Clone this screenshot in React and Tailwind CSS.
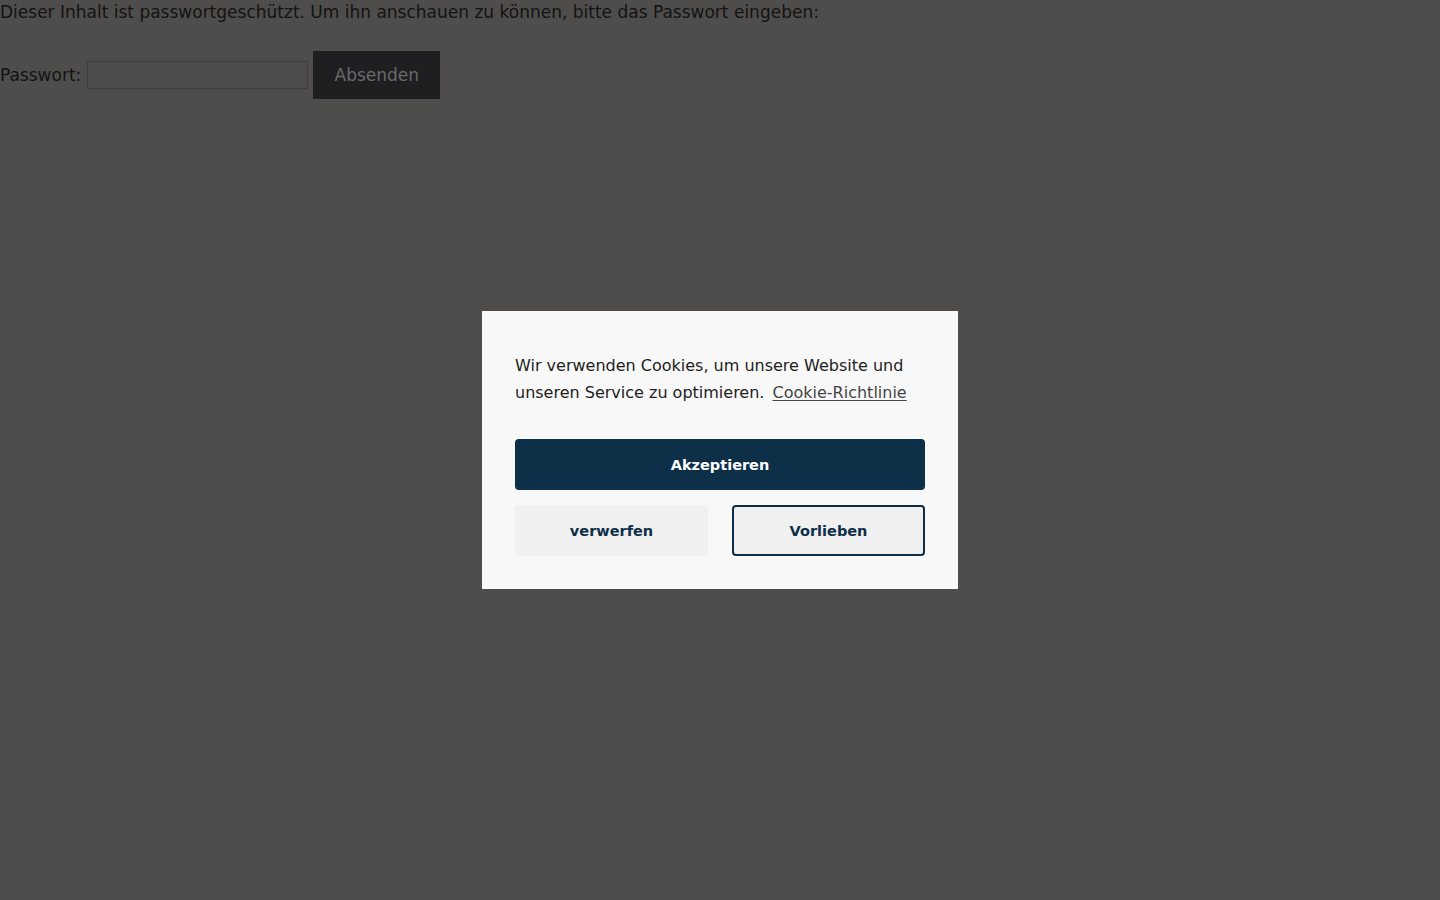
export default function App() {
  return (
    <div className="min-h-screen w-full bg-[#4e4d4b] text-[#131313] font-['DejaVu_Sans',sans-serif] text-[17px]">
      <p className="leading-[24px]">
        Dieser Inhalt ist passwortgeschützt. Um ihn anschauen zu können, bitte das Passwort eingeben:
      </p>
      <form className="mt-[27px] flex items-center" onSubmit={(e) => e.preventDefault()}>
        <label className="mr-[6px] leading-[24px]">Passwort:</label>
        <input
          type="password"
          className="h-[28px] w-[221px] border border-[#3f3e3c] bg-[#4d4c4a] outline-none"
        />
        <button
          type="submit"
          className="ml-[5px] h-[48px] w-[127px] bg-[#1f1f21] text-[#6a6a6a] leading-[24px]"
        >
          Absenden
        </button>
      </form>

      {/* Cookie consent dialog */}
      <div className="fixed inset-0 flex items-center justify-center">
        <div className="w-[476px] bg-[#f8f8f8] px-[33px] pt-[41px] pb-[33px]">
          <p className="text-[16px] leading-[27px] text-[#222222]">
            Wir verwenden Cookies, um unsere Website und unseren Service zu optimieren.{" "}
            <a href="#" className="ml-[3px] text-[#454545] underline underline-offset-2">
              Cookie-Richtlinie
            </a>
          </p>
          <button className="mt-[33px] h-[51px] w-full rounded-[4px] bg-[#0d2f48] pt-[2px] text-[14.5px] font-bold text-white">
            Akzeptieren
          </button>
          <div className="mt-[15px] grid grid-cols-2 gap-[24px]">
            <button className="h-[51px] rounded-[4px] bg-[#f0f0f0] pt-[2px] text-[14.5px] font-bold text-[#0d2f48]">
              verwerfen
            </button>
            <button className="h-[51px] rounded-[4px] border-2 border-[#0d2f48] bg-[#f0f0f0] pt-[2px] text-[14.5px] font-bold text-[#0d2f48]">
              Vorlieben
            </button>
          </div>
        </div>
      </div>
    </div>
  );
}
